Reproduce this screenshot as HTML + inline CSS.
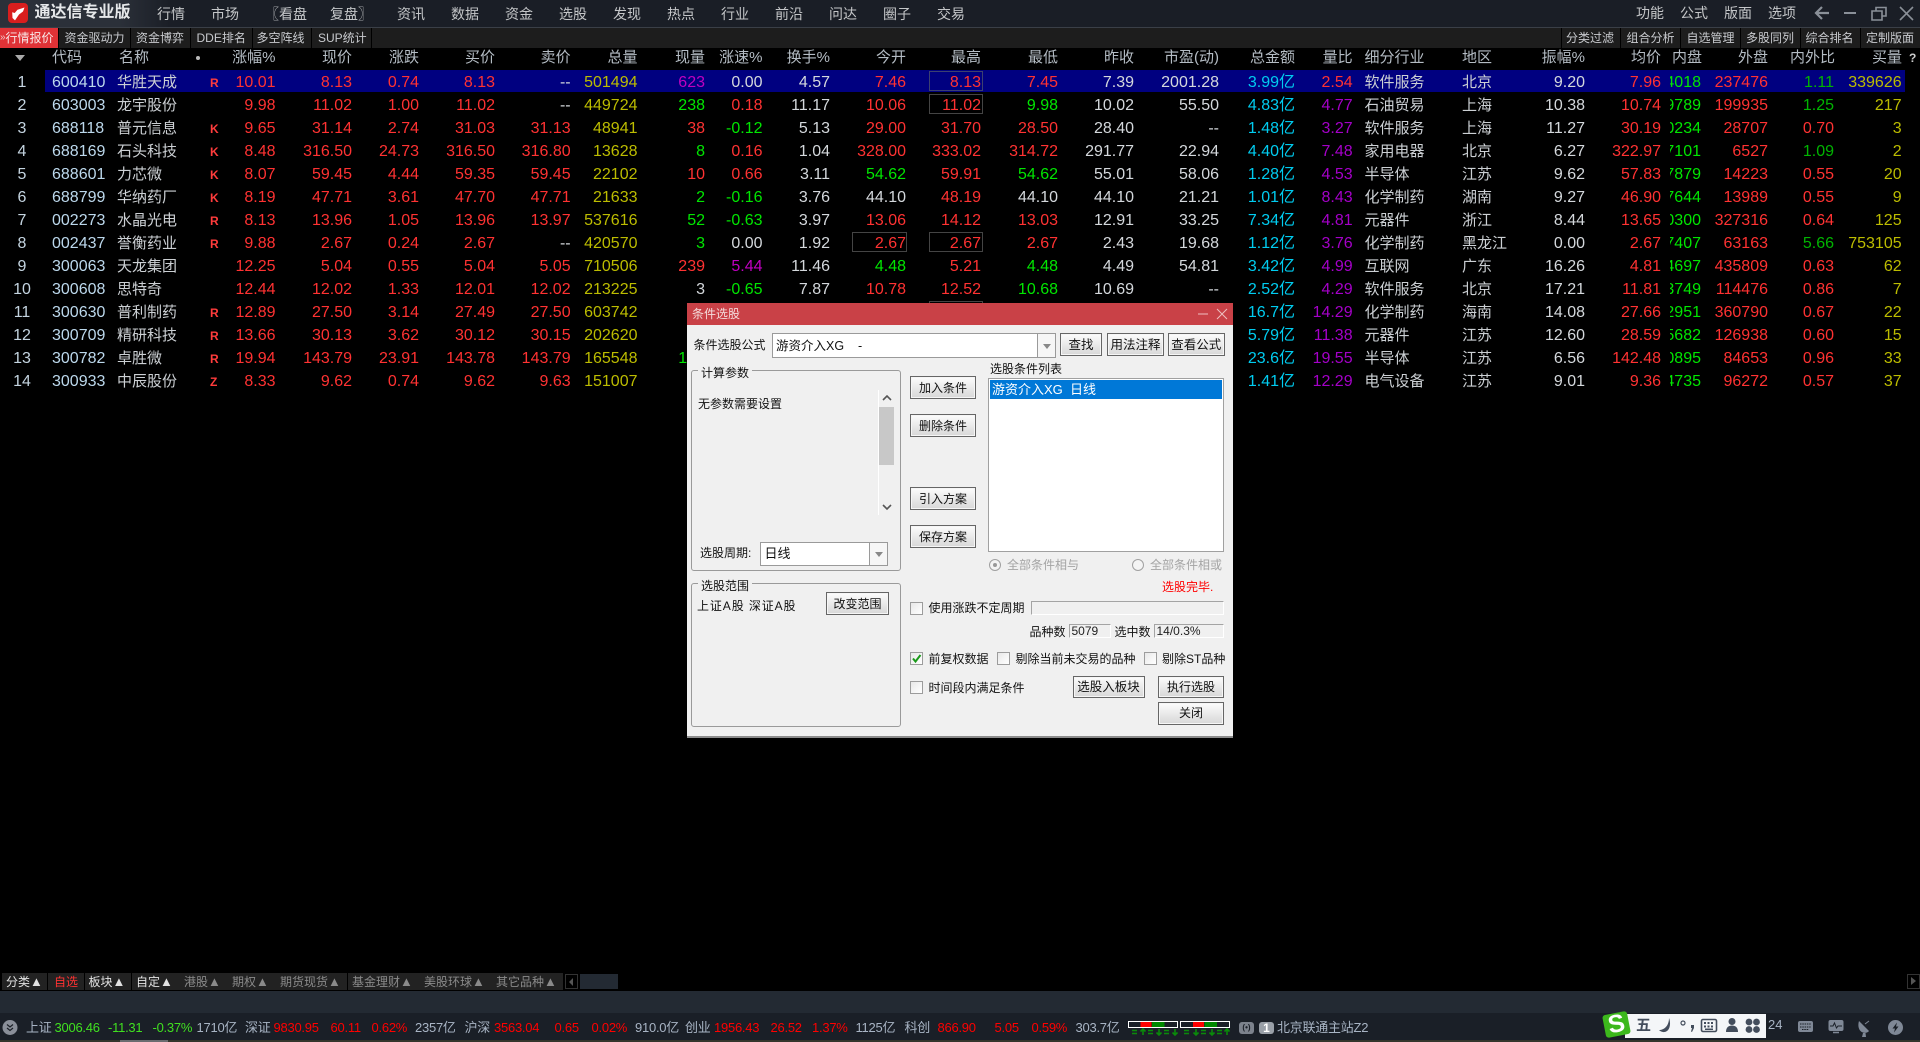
<!DOCTYPE html>
<html lang="zh">
<head>
<meta charset="utf-8">
<title>通达信专业版</title>
<style>
*{box-sizing:border-box;margin:0;padding:0}
html,body{width:1920px;height:1042px;overflow:hidden;background:#000}
body{position:relative;font-family:"Liberation Sans","Noto Sans CJK SC",sans-serif;color:#ccc}
.a{position:absolute;white-space:nowrap}
#top{position:absolute;left:0;top:0;width:1920px;height:28px;background:#1a1e26;border-bottom:1px solid #3a3f47}
#topg{position:absolute;left:0;top:0;width:170px;height:27px;background:linear-gradient(90deg,#2b3039,#2b3039 70%,#1a1e26)}
.m{position:absolute;top:3px;line-height:22px;font-size:14px;color:#c4c6c8;white-space:nowrap}
#tabs{position:absolute;left:0;top:28px;width:1920px;height:20px;background:#1d1d1d}
.t{position:absolute;top:28px;height:20px;line-height:20px;font-size:12px;color:#c8cace;white-space:nowrap}
.sp{position:absolute;top:28px;width:1px;height:20px;background:#000}
.h{position:absolute;top:47px;line-height:22px;font-size:15px;color:#b4bcc4;white-space:nowrap}
.row{position:absolute;left:0;width:1920px;height:23px;line-height:25px;font-size:16px}
.row span{position:absolute;top:0;white-space:nowrap}
.sel{height:22px;line-height:25px}
#selbg{position:absolute;left:45px;top:70px;width:1860px;height:22px;background:#000080}
.n{left:0;width:44px;text-align:center;color:#c4d4e0}
.cd{left:52px;color:#bcd8ec}
.nm{left:117px;font-size:15px;color:#ccd0d4}
.fl{left:210px;top:1px!important;font-size:12px;font-weight:bold;color:#ff3c3c}
.p1,.p2,.p3,.p4,.p5,.p10,.p11,.p12,.p18,.p20{color:#ff3232}
.p1{right:1644.5px}.p2{right:1568px}.p3{right:1501px}.p4{right:1425px}.p5{right:1349.4px}
.p6{right:1282.5px;color:#bcbc00}
.p7{right:1215px;color:#00e600}
.p8{right:1157.5px;color:#ff3232}
.p9{right:1090px;color:#d4d8dc}
.p10{right:1014px}.p11{right:939px}.p12{right:862px}
.p13{right:786px;color:#d4d8dc}
.p14{right:701px;color:#d4d8dc}
.p15{right:625px;color:#00ccf0}
.p16{right:567.4px;color:#a400c8}
.i{left:1364.5px;font-size:15px;color:#ccd0d4}
.d{left:1462px;font-size:15px;color:#ccd0d4}
.p17{right:335px;color:#d4d8dc}
.p18{right:259px}
.p19{left:1670px;width:31px;overflow:hidden;direction:rtl;text-align:right;color:#00e600}
.p20{right:152px}
.p21{right:86px;color:#ff3232}
.p22{right:18.4px;color:#bcbc00}
.w{color:#d4d8dc!important}.r{color:#ff3232!important}.g{color:#00e600!important}.v{color:#c000c0!important}.dg{color:#00b400!important}
.bx{position:absolute;border:1px solid #444;height:20px}
#dlg{position:absolute;left:687px;top:303px;width:546px;height:435px;background:#f0f0f0;border-bottom:2px solid #8c8c8c}
#dt{position:absolute;left:0;top:0;width:546px;height:22px;background:#c94147;color:#f4dcdc;font-size:12px;line-height:22px;padding-left:5px}
.k{position:absolute;color:#111;font-size:12px;line-height:16px;white-space:nowrap}
.btn{position:absolute;border:1px solid #666;background:linear-gradient(#fdfdfd,#e2e2e2 70%,#d8d8d8);color:#111;font-size:12px;text-align:center;white-space:nowrap;box-shadow:inset 0 0 0 1px #f6f6f6}
.grp{position:absolute;border:1px solid #9a9a9a;border-radius:3px}
.leg{position:absolute;background:#f0f0f0;color:#111;font-size:12px;line-height:16px;padding:0 3px;white-space:nowrap}
.cmb{position:absolute;background:#fff;border:1px solid #9a9a9a;color:#111;font-size:12px;white-space:nowrap}
.ar{position:absolute;right:0;top:0;bottom:0;border-left:1px solid #9a9a9a;background:#f6f6f6}
.ar:after{content:"";position:absolute;left:50%;top:50%;margin:-2px 0 0 -4px;border:4px solid transparent;border-top:5px solid #888;border-bottom:0}
.cb{position:absolute;width:13px;height:13px;background:linear-gradient(135deg,#e8e8e8,#fff);border:1px solid #9c9c9c}
.ed{position:absolute;background:#f0f0f0;border:1px solid;border-color:#a4a4a4 #fff #fff #a4a4a4;font-size:12px;color:#222;line-height:13px;padding-left:2px;white-space:nowrap}
.rd{position:absolute;width:12px;height:12px;border-radius:50%;border:1px solid #a0a0a0;background:#f4f4f4}
.bt{position:absolute;top:973px;height:17px;line-height:18px;background:#222;font-size:12px;color:#8a8a8a;padding-left:4px;white-space:nowrap}
.bt i{font-style:normal;font-size:13px}
.on{color:#e2e2e2}
.s{position:absolute;top:1017px;line-height:21px;font-size:13px;letter-spacing:-.25px;white-space:nowrap;color:#a8b4c4}
.sg{color:#40e020}.sr{color:#f00}
</style>
</head>
<body>
<div id="top"></div><div id="topg"></div>
<svg class="a" style="left:8px;top:3px" width="20" height="20" viewBox="0 0 20 20"><rect width="20" height="20" rx="4" fill="#d81e1e"/><path d="M16.5 4.5L9.5 6.8L6.7 10L4.200 9.3L4.500 15L7 17.400L11 11.500L15 8.500Z" fill="#fff"/></svg>
<div class="a" style="left:34.5px;top:1px;font-size:16px;line-height:24px;font-weight:bold;color:#e6e8ea">通达信专业版</div>
<div class="m" style="left:157px">行情</div>
<div class="m" style="left:211px">市场</div>
<div class="m" style="left:265px">〖看盘</div>
<div class="m" style="left:330px">复盘〗</div>
<div class="m" style="left:397px">资讯</div>
<div class="m" style="left:451px">数据</div>
<div class="m" style="left:505px">资金</div>
<div class="m" style="left:559px">选股</div>
<div class="m" style="left:613px">发现</div>
<div class="m" style="left:667px">热点</div>
<div class="m" style="left:721px">行业</div>
<div class="m" style="left:775px">前沿</div>
<div class="m" style="left:829px">问达</div>
<div class="m" style="left:883px">圈子</div>
<div class="m" style="left:937px">交易</div>
<div class="m" style="left:1636px;top:2px">功能</div>
<div class="m" style="left:1680px;top:2px">公式</div>
<div class="m" style="left:1724px;top:2px">版面</div>
<div class="m" style="left:1768px;top:2px">选项</div>
<svg class="a" style="left:1814px;top:5px" width="106" height="18" viewBox="0 0 106 18" fill="none" stroke="#8a9098" stroke-width="1.6"><path d="M15 8H2M8 2L2 8L8 14" stroke-width="2.2"/><path d="M30 8H42" stroke-width="2"/><path d="M58 6H68V15H58ZM62 6V2.500H72V11H68"/><path d="M86 2L99 15M99 2L86 15"/></svg>

<div id="tabs"></div>
<div class="a" style="left:0;top:28px;width:58px;height:20px;background:#e03236"></div>
<div class="t" style="left:0;color:#f0c8c8;font-size:10px">»</div>
<div class="t" style="left:5.5px;color:#f8e8e8;font-size:12px">行情报价</div>
<div class="sp" style="left:58px"></div>
<div class="t" style="left:64.5px">资金驱动力</div><div class="sp" style="left:130px"></div>
<div class="t" style="left:136px">资金博弈</div><div class="sp" style="left:190px"></div>
<div class="t" style="left:196.5px">DDE排名</div><div class="sp" style="left:252px"></div>
<div class="t" style="left:256.5px">多空阵线</div><div class="sp" style="left:311px"></div>
<div class="t" style="left:318px">SUP统计</div><div class="sp" style="left:371px"></div>
<div class="sp" style="left:1561px"></div><div class="t" style="left:1566px">分类过滤</div>
<div class="sp" style="left:1620px"></div><div class="t" style="left:1626.5px">组合分析</div>
<div class="sp" style="left:1680px"></div><div class="t" style="left:1686.5px">自选管理</div>
<div class="sp" style="left:1740px"></div><div class="t" style="left:1746px">多股同列</div>
<div class="sp" style="left:1799.5px"></div><div class="t" style="left:1805.5px">综合排名</div>
<div class="sp" style="left:1859.5px"></div><div class="t" style="left:1866px">定制版面</div>

<div class="a" style="left:15px;top:55px;border:5px solid transparent;border-top:6px solid #aaa;border-bottom:0"></div>
<div class="h" style="left:52px">代码</div>
<div class="h" style="left:119px">名称</div>
<div class="a" style="left:196px;top:56px;width:4px;height:4px;border-radius:50%;background:#bbb"></div>
<div class="h" style="right:1644.5px">涨幅%</div>
<div class="h" style="right:1568px">现价</div>
<div class="h" style="right:1501px">涨跌</div>
<div class="h" style="right:1425px">买价</div>
<div class="h" style="right:1349.4px">卖价</div>
<div class="h" style="right:1282.5px">总量</div>
<div class="h" style="right:1215px">现量</div>
<div class="h" style="right:1157.5px">涨速%</div>
<div class="h" style="right:1090px">换手%</div>
<div class="h" style="right:1014px">今开</div>
<div class="h" style="right:939px">最高</div>
<div class="h" style="right:862px">最低</div>
<div class="h" style="right:786px">昨收</div>
<div class="h" style="right:701px">市盈(动)</div>
<div class="h" style="right:625px">总金额</div>
<div class="h" style="right:567.4px">量比</div>
<div class="h" style="left:1364.5px">细分行业</div>
<div class="h" style="left:1462px">地区</div>
<div class="h" style="right:335px">振幅%</div>
<div class="h" style="right:259px">均价</div>
<div class="h" style="left:1672px">内盘</div>
<div class="h" style="right:152px">外盘</div>
<div class="h" style="right:85px">内外比</div>
<div class="h" style="right:18px">买量</div>
<div class="a" style="left:1909px;top:48px;line-height:20px;font-size:12px;font-weight:bold;color:#ccc">?</div>

<div id="selbg"></div>
<div class="bx" style="left:928.5px;top:71px;width:54px;border-color:#3c4070"></div>
<div class="bx" style="left:928.5px;top:94px;width:54px"></div>
<div class="bx" style="left:852px;top:232px;width:55px"></div>
<div class="bx" style="left:928.5px;top:232px;width:54px"></div>
<div class="bx" style="left:928.5px;top:301px;width:54px"></div>

<div class="row sel" style="top:70px"><span class="n">1</span><span class="cd">600410</span><span class="nm">华胜天成</span><span class="fl">R</span><span class="p1">10.01</span><span class="p2">8.13</span><span class="p3">0.74</span><span class="p4">8.13</span><span class="p5 w">--</span><span class="p6">501494</span><span class="p7 v">623</span><span class="p8 w">0.00</span><span class="p9">4.57</span><span class="p10">7.46</span><span class="p11">8.13</span><span class="p12">7.45</span><span class="p13">7.39</span><span class="p14">2001.28</span><span class="p15">3.99亿</span><span class="p16 r">2.54</span><span class="i">软件服务</span><span class="d">北京</span><span class="p17">9.20</span><span class="p18">7.96</span><span class="p19">4018</span><span class="p20">237476</span><span class="p21 dg">1.11</span><span class="p22">339626</span></div>
<div class="row" style="top:93px"><span class="n">2</span><span class="cd">603003</span><span class="nm">龙宇股份</span><span class="p1">9.98</span><span class="p2">11.02</span><span class="p3">1.00</span><span class="p4">11.02</span><span class="p5 w">--</span><span class="p6">449724</span><span class="p7">238</span><span class="p8">0.18</span><span class="p9">11.17</span><span class="p10">10.06</span><span class="p11">11.02</span><span class="p12 g">9.98</span><span class="p13">10.02</span><span class="p14">55.50</span><span class="p15">4.83亿</span><span class="p16">4.77</span><span class="i">石油贸易</span><span class="d">上海</span><span class="p17">10.38</span><span class="p18">10.74</span><span class="p19">9789</span><span class="p20">199935</span><span class="p21 dg">1.25</span><span class="p22">217</span></div>
<div class="row" style="top:116px"><span class="n">3</span><span class="cd">688118</span><span class="nm">普元信息</span><span class="fl">K</span><span class="p1">9.65</span><span class="p2">31.14</span><span class="p3">2.74</span><span class="p4">31.03</span><span class="p5">31.13</span><span class="p6">48941</span><span class="p7 r">38</span><span class="p8 g">-0.12</span><span class="p9">5.13</span><span class="p10">29.00</span><span class="p11">31.70</span><span class="p12">28.50</span><span class="p13">28.40</span><span class="p14">--</span><span class="p15">1.48亿</span><span class="p16">3.27</span><span class="i">软件服务</span><span class="d">上海</span><span class="p17">11.27</span><span class="p18">30.19</span><span class="p19">0234</span><span class="p20">28707</span><span class="p21">0.70</span><span class="p22">3</span></div>
<div class="row" style="top:139px"><span class="n">4</span><span class="cd">688169</span><span class="nm">石头科技</span><span class="fl">K</span><span class="p1">8.48</span><span class="p2">316.50</span><span class="p3">24.73</span><span class="p4">316.50</span><span class="p5">316.80</span><span class="p6">13628</span><span class="p7">8</span><span class="p8">0.16</span><span class="p9">1.04</span><span class="p10">328.00</span><span class="p11">333.02</span><span class="p12">314.72</span><span class="p13">291.77</span><span class="p14">22.94</span><span class="p15">4.40亿</span><span class="p16">7.48</span><span class="i">家用电器</span><span class="d">北京</span><span class="p17">6.27</span><span class="p18">322.97</span><span class="p19">7101</span><span class="p20">6527</span><span class="p21 dg">1.09</span><span class="p22">2</span></div>
<div class="row" style="top:162px"><span class="n">5</span><span class="cd">688601</span><span class="nm">力芯微</span><span class="fl">K</span><span class="p1">8.07</span><span class="p2">59.45</span><span class="p3">4.44</span><span class="p4">59.35</span><span class="p5">59.45</span><span class="p6">22102</span><span class="p7 r">10</span><span class="p8">0.66</span><span class="p9">3.11</span><span class="p10 g">54.62</span><span class="p11">59.91</span><span class="p12 g">54.62</span><span class="p13">55.01</span><span class="p14">58.06</span><span class="p15">1.28亿</span><span class="p16">4.53</span><span class="i">半导体</span><span class="d">江苏</span><span class="p17">9.62</span><span class="p18">57.83</span><span class="p19">7879</span><span class="p20">14223</span><span class="p21">0.55</span><span class="p22">20</span></div>
<div class="row" style="top:185px"><span class="n">6</span><span class="cd">688799</span><span class="nm">华纳药厂</span><span class="fl">K</span><span class="p1">8.19</span><span class="p2">47.71</span><span class="p3">3.61</span><span class="p4">47.70</span><span class="p5">47.71</span><span class="p6">21633</span><span class="p7">2</span><span class="p8 g">-0.16</span><span class="p9">3.76</span><span class="p10 w">44.10</span><span class="p11">48.19</span><span class="p12 w">44.10</span><span class="p13">44.10</span><span class="p14">21.21</span><span class="p15">1.01亿</span><span class="p16">8.43</span><span class="i">化学制药</span><span class="d">湖南</span><span class="p17">9.27</span><span class="p18">46.90</span><span class="p19">7644</span><span class="p20">13989</span><span class="p21">0.55</span><span class="p22">9</span></div>
<div class="row" style="top:208px"><span class="n">7</span><span class="cd">002273</span><span class="nm">水晶光电</span><span class="fl">R</span><span class="p1">8.13</span><span class="p2">13.96</span><span class="p3">1.05</span><span class="p4">13.96</span><span class="p5">13.97</span><span class="p6">537616</span><span class="p7">52</span><span class="p8 g">-0.63</span><span class="p9">3.97</span><span class="p10">13.06</span><span class="p11">14.12</span><span class="p12">13.03</span><span class="p13">12.91</span><span class="p14">33.25</span><span class="p15">7.34亿</span><span class="p16">4.81</span><span class="i">元器件</span><span class="d">浙江</span><span class="p17">8.44</span><span class="p18">13.65</span><span class="p19">0300</span><span class="p20">327316</span><span class="p21">0.64</span><span class="p22">125</span></div>
<div class="row" style="top:231px"><span class="n">8</span><span class="cd">002437</span><span class="nm">誉衡药业</span><span class="fl">R</span><span class="p1">9.88</span><span class="p2">2.67</span><span class="p3">0.24</span><span class="p4">2.67</span><span class="p5 w">--</span><span class="p6">420570</span><span class="p7">3</span><span class="p8 w">0.00</span><span class="p9">1.92</span><span class="p10">2.67</span><span class="p11">2.67</span><span class="p12">2.67</span><span class="p13">2.43</span><span class="p14">19.68</span><span class="p15">1.12亿</span><span class="p16">3.76</span><span class="i">化学制药</span><span class="d">黑龙江</span><span class="p17">0.00</span><span class="p18">2.67</span><span class="p19">7407</span><span class="p20">63163</span><span class="p21 dg">5.66</span><span class="p22">753105</span></div>
<div class="row" style="top:254px"><span class="n">9</span><span class="cd">300063</span><span class="nm">天龙集团</span><span class="p1">12.25</span><span class="p2">5.04</span><span class="p3">0.55</span><span class="p4">5.04</span><span class="p5">5.05</span><span class="p6">710506</span><span class="p7 r">239</span><span class="p8 v">5.44</span><span class="p9">11.46</span><span class="p10 g">4.48</span><span class="p11">5.21</span><span class="p12 g">4.48</span><span class="p13">4.49</span><span class="p14">54.81</span><span class="p15">3.42亿</span><span class="p16">4.99</span><span class="i">互联网</span><span class="d">广东</span><span class="p17">16.26</span><span class="p18">4.81</span><span class="p19">4697</span><span class="p20">435809</span><span class="p21">0.63</span><span class="p22">62</span></div>
<div class="row" style="top:277px"><span class="n">10</span><span class="cd">300608</span><span class="nm">思特奇</span><span class="p1">12.44</span><span class="p2">12.02</span><span class="p3">1.33</span><span class="p4">12.01</span><span class="p5">12.02</span><span class="p6">213225</span><span class="p7 w">3</span><span class="p8 g">-0.65</span><span class="p9">7.87</span><span class="p10">10.78</span><span class="p11">12.52</span><span class="p12 g">10.68</span><span class="p13">10.69</span><span class="p14">--</span><span class="p15">2.52亿</span><span class="p16">4.29</span><span class="i">软件服务</span><span class="d">北京</span><span class="p17">17.21</span><span class="p18">11.81</span><span class="p19">3749</span><span class="p20">114476</span><span class="p21">0.86</span><span class="p22">7</span></div>
<div class="row" style="top:300px"><span class="n">11</span><span class="cd">300630</span><span class="nm">普利制药</span><span class="fl">R</span><span class="p1">12.89</span><span class="p2">27.50</span><span class="p3">3.14</span><span class="p4">27.49</span><span class="p5">27.50</span><span class="p6">603742</span><span class="p15">16.7亿</span><span class="p16">14.29</span><span class="i">化学制药</span><span class="d">海南</span><span class="p17">14.08</span><span class="p18">27.66</span><span class="p19">2951</span><span class="p20">360790</span><span class="p21">0.67</span><span class="p22">22</span></div>
<div class="row" style="top:323px"><span class="n">12</span><span class="cd">300709</span><span class="nm">精研科技</span><span class="fl">R</span><span class="p1">13.66</span><span class="p2">30.13</span><span class="p3">3.62</span><span class="p4">30.12</span><span class="p5">30.15</span><span class="p6">202620</span><span class="p15">5.79亿</span><span class="p16">11.38</span><span class="i">元器件</span><span class="d">江苏</span><span class="p17">12.60</span><span class="p18">28.59</span><span class="p19">5682</span><span class="p20">126938</span><span class="p21">0.60</span><span class="p22">15</span></div>
<div class="row" style="top:346px"><span class="n">13</span><span class="cd">300782</span><span class="nm">卓胜微</span><span class="fl">R</span><span class="p1">19.94</span><span class="p2">143.79</span><span class="p3">23.91</span><span class="p4">143.78</span><span class="p5">143.79</span><span class="p6">165548</span><span class="p7">123</span><span class="p15">23.6亿</span><span class="p16">19.55</span><span class="i">半导体</span><span class="d">江苏</span><span class="p17">6.56</span><span class="p18">142.48</span><span class="p19">0895</span><span class="p20">84653</span><span class="p21">0.96</span><span class="p22">33</span></div>
<div class="row" style="top:369px"><span class="n">14</span><span class="cd">300933</span><span class="nm">中辰股份</span><span class="fl">Z</span><span class="p1">8.33</span><span class="p2">9.62</span><span class="p3">0.74</span><span class="p4">9.62</span><span class="p5">9.63</span><span class="p6">151007</span><span class="p15">1.41亿</span><span class="p16">12.29</span><span class="i">电气设备</span><span class="d">江苏</span><span class="p17">9.01</span><span class="p18">9.36</span><span class="p19">4735</span><span class="p20">96272</span><span class="p21">0.57</span><span class="p22">37</span></div>

<!-- dialog: inner coordinates = page − (687,303) -->
<div id="dlg">
<div id="dt">条件选股</div>
<svg class="a" style="left:511px;top:5px" width="30" height="12" viewBox="0 0 30 12" fill="none" stroke="#eebfc0" stroke-width="1"><path d="M0 6H10M19 1L29 11M29 1L19 11"/></svg>

<div class="k" style="left:6.5px;top:34px">条件选股公式</div>
<div class="cmb" style="left:85px;top:30px;width:284px;height:25px;line-height:24px;padding-left:3px;font-size:12.5px">游资介入XG &nbsp;&nbsp; -<div class="ar" style="width:18px"></div></div>
<div class="btn" style="left:373px;top:30px;width:42px;height:23px;line-height:22px;font-size:12.5px">查找</div>
<div class="btn" style="left:420px;top:30px;width:57px;height:23px;line-height:22px;font-size:12.5px">用法注释</div>
<div class="btn" style="left:481px;top:30px;width:56.5px;height:23px;line-height:22px;font-size:12.5px">查看公式</div>

<div class="grp" style="left:4px;top:67px;width:210px;height:201px"></div>
<div class="leg" style="left:11px;top:62px">计算参数</div>
<div class="k" style="left:11px;top:93px">无参数需要设置</div>
<div class="a" style="left:191px;top:87px;width:1px;height:125px;background:#fff"></div>
<div class="a" style="left:192px;top:104px;width:15px;height:58px;background:#c8c8c8"></div>
<svg class="a" style="left:195px;top:92px" width="10" height="120" viewBox="0 0 10 120" fill="none" stroke="#555" stroke-width="1.6"><path d="M1 5L5 1L9 5"/><path d="M1 110L5 114L9 110"/></svg>
<div class="k" style="left:13px;top:242px">选股周期:</div>
<div class="cmb" style="left:73px;top:238.5px;width:128px;height:24px;line-height:22px;padding-left:3.500px;font-size:13px">日线<div class="ar" style="width:18px"></div></div>

<div class="btn" style="left:223px;top:73px;width:66px;height:23px;line-height:22px">加入条件</div>
<div class="btn" style="left:223px;top:111px;width:66px;height:23px;line-height:22px">删除条件</div>
<div class="btn" style="left:223px;top:184px;width:66px;height:23px;line-height:22px">引入方案</div>
<div class="btn" style="left:223px;top:222px;width:66px;height:23px;line-height:22px">保存方案</div>

<div class="k" style="left:303px;top:58px">选股条件列表</div>
<div class="a" style="left:301px;top:75px;width:236px;height:174px;background:#fff;border:1px solid #a0a0a0"></div>
<div class="a" style="left:303px;top:77px;width:232px;height:19px;background:#0078d7;color:#fff;font-size:13px;line-height:20px;padding-left:2px">游资介入XG &nbsp;日线</div>

<div class="rd" style="left:302px;top:256px"></div><div class="a" style="left:306px;top:260px;width:4px;height:4px;border-radius:50%;background:#999"></div>
<div class="k" style="left:320px;top:254px;color:#a4a4a4">全部条件相与</div>
<div class="rd" style="left:444.5px;top:256px"></div>
<div class="k" style="left:463px;top:254px;color:#a4a4a4">全部条件相或</div>
<div class="k" style="left:475px;top:276px;color:#f00">选股完毕.</div>

<div class="grp" style="left:4px;top:280px;width:210px;height:144px"></div>
<div class="leg" style="left:11px;top:275px">选股范围</div>
<div class="k" style="left:10px;top:295px;letter-spacing:.9px">上证A股 深证A股</div>
<div class="btn" style="left:139px;top:289px;width:63px;height:23px;line-height:22px">改变范围</div>

<div class="cb" style="left:223px;top:299px"></div>
<div class="k" style="left:241.5px;top:297px">使用涨跌不定周期</div>
<div class="ed" style="left:343.500px;top:298px;width:193.500px;height:14px"></div>
<div class="k" style="left:342.5px;top:321px">品种数</div>
<div class="ed" style="left:381.5px;top:321px;width:42px;height:14px">5079</div>
<div class="k" style="left:427.5px;top:321px">选中数</div>
<div class="ed" style="left:466.5px;top:321px;width:70.500px;height:14px">14/0.3%</div>

<div class="cb" style="left:223px;top:349px"></div>
<svg class="a" style="left:224px;top:350px" width="11" height="11" viewBox="0 0 11 11" fill="none" stroke="#1a9a1a" stroke-width="2"><path d="M2 5.500L4.500 8.500L9.500 2"/></svg>
<div class="k" style="left:241.5px;top:348px">前复权数据</div>
<div class="cb" style="left:310px;top:349px"></div>
<div class="k" style="left:328.5px;top:348px">剔除当前未交易的品种</div>
<div class="cb" style="left:457px;top:349px"></div>
<div class="k" style="left:475px;top:348px">剔除ST品种</div>
<div class="cb" style="left:223px;top:378px"></div>
<div class="k" style="left:241.5px;top:377px">时间段内满足条件</div>
<div class="btn" style="left:385.5px;top:372.5px;width:72px;height:22.5px;line-height:21px;font-size:12.5px">选股入板块</div>
<div class="btn" style="left:471px;top:372.5px;width:66px;height:22.5px;line-height:21px">执行选股</div>
<div class="btn" style="left:471px;top:399px;width:66px;height:22.5px;line-height:21px">关闭</div>
</div>

<!-- bottom tabs -->
<div class="bt on" style="left:2px;width:45px">分类<i>▲</i></div>
<div class="bt" style="left:48px;width:36px;color:#ff3232;padding-left:6px">自选</div>
<div class="bt on" style="left:84.5px;width:46.5px">板块<i>▲</i></div>
<div class="bt on" style="left:132px;width:47.5px">自定<i>▲</i></div>
<div class="bt" style="left:180px;width:47.5px">港股<i>▲</i></div>
<div class="bt" style="left:228px;width:47.5px">期权<i>▲</i></div>
<div class="bt" style="left:276px;width:71px">期货现货<i>▲</i></div>
<div class="bt" style="left:348px;width:71.5px">基金理财<i>▲</i></div>
<div class="bt" style="left:420px;width:71.5px">美股环球<i>▲</i></div>
<div class="bt" style="left:492px;width:71px">其它品种<i>▲</i></div>
<div class="a" style="left:565px;top:974px;width:13px;height:15px;border:1px solid #333"></div>
<div class="a" style="left:569px;top:978px;border:4px solid transparent;border-right:4px solid #555;border-left:0"></div>
<div class="a" style="left:579.5px;top:974px;width:38px;height:15px;background:#232a33"></div>
<div class="a" style="left:1906.5px;top:974px;width:13px;height:15px;border:1px solid #333"></div>
<div class="a" style="left:1911px;top:977px;border:4px solid transparent;border-left:5px solid #555;border-right:0"></div>

<!-- status -->
<div class="a" style="left:0;top:991px;width:1920px;height:22px;background:#232a33"></div>
<div class="a" style="left:0;top:1013px;width:1920px;height:27px;background:#1a1f27"></div>
<div class="a" style="left:0;top:1040px;width:1920px;height:2px;background:#34352c"></div>
<div class="a" style="left:120px;top:1040px;width:48px;height:2px;background:#6a6c70"></div>

<svg class="a" style="left:2px;top:1019px" width="16" height="17" viewBox="0 0 16 17"><circle cx="8" cy="8.500" r="7.500" fill="#8a8f99"/><path d="M5 5.500L8 8L11 5.500M5 9L8 11.500L11 9" fill="none" stroke="#1a1f27" stroke-width="1.2"/></svg>
<div class="s" style="left:26px">上证</div>
<div class="s sg" style="left:54.5px">3006.46</div>
<div class="s sg" style="left:108px">-11.31</div>
<div class="s sg" style="left:152.5px">-0.37%</div>
<div class="s" style="left:196.5px">1710亿</div>
<div class="s" style="left:245px">深证</div>
<div class="s sr" style="left:273.5px">9830.95</div>
<div class="s sr" style="left:330.5px">60.11</div>
<div class="s sr" style="left:371.5px">0.62%</div>
<div class="s" style="left:415px">2357亿</div>
<div class="s" style="left:464.5px">沪深</div>
<div class="s sr" style="left:494px">3563.04</div>
<div class="s sr" style="left:554.5px">0.65</div>
<div class="s sr" style="left:591.5px">0.02%</div>
<div class="s" style="left:635px">910.0亿</div>
<div class="s" style="left:685px">创业</div>
<div class="s sr" style="left:714px">1956.43</div>
<div class="s sr" style="left:770.5px">26.52</div>
<div class="s sr" style="left:812px">1.37%</div>
<div class="s" style="left:855.5px">1125亿</div>
<div class="s" style="left:904.5px">科创</div>
<div class="s sr" style="left:937.5px">866.90</div>
<div class="s sr" style="left:994.5px">5.05</div>
<div class="s sr" style="left:1031.5px">0.59%</div>
<div class="s" style="left:1075.5px">303.7亿</div>

<svg class="a" style="left:1128px;top:1020px" width="103" height="16" viewBox="0 0 103 16">
<g fill="none" stroke="#fff"><rect x=".5" y="1.500" width="49" height="6"/><rect x="52.5" y="1.500" width="49" height="6"/></g>
<rect x="12.500" y="2" width="11" height="5" fill="#f00"/><rect x="24" y="2" width="12.500" height="5" fill="#080"/>
<rect x="65" y="2" width="11" height="5" fill="#f00"/><rect x="76.500" y="2" width="12.500" height="5" fill="#080"/>
<g stroke="#0a8a0a" stroke-width="1.6" fill="none">
<path d="M4 10.500H9M4 13.500H9M15 9V15M12.500 11.500L15 9L17.500 11.500M20 10.500H25M20 13.500H25M31 9V15M28.500 12.500L31 15L33.500 12.500M36 10.500H41M36 13.500H41M47 9V15M44.500 12.500L47 15L49.500 12.500"/>
<path d="M56 10.500H61M56 13.500H61M68 9V15M65.500 12.500L68 15L70.500 12.500M73 10.500H78M73 13.500H78M84 9V15M81.500 12.500L84 15L86.500 12.500M89 10.500H94M89 13.500H94M99 9V15M96.500 11.500L99 9L101.500 11.500"/></g></svg>

<div class="a" style="left:1239px;top:1022px;width:15px;height:12px;border-radius:3px;background:#7c828c;color:#1a1f27;font-size:8px;line-height:12px;text-align:center;font-weight:bold">(•)</div>
<div class="a" style="left:1259px;top:1022px;width:15px;height:12px;border-radius:3px;background:#9aa0a8;color:#fff;font-size:12px;line-height:12px;text-align:center;font-weight:bold">1</div>
<div class="s" style="left:1277px">北京联通主站Z2</div>
<div class="a" style="left:1768px;top:1014px;line-height:22px;font-size:13px;color:#a8b4c4">24</div>

<div class="a" style="left:1625px;top:1014px;width:141px;height:24px;background:#f4f6f8"></div>
<div class="a" style="left:1604px;top:1013px;width:25px;height:23px;border-radius:3px;background:#3cb81c;transform:rotate(-11deg);color:#fff;font-weight:bold;font-size:25px;line-height:23px;text-align:center">S</div>
<div class="a" style="left:1636px;top:1014px;line-height:24px;font-size:15px;color:#434d5c;font-weight:bold">五</div>
<svg class="a" style="left:1658px;top:1017px" width="106" height="18" viewBox="0 0 106 18" fill="#434d5c">
<path d="M11 1C13 6 12 12 9 14C6 16 3 15 1 13C6 13 11 9 11 1Z"/>
<circle cx="25" cy="6" r="2" fill="none" stroke="#434d5c" stroke-width="1.2"/><path d="M33 8H36V11L34 15L33 14.500L34 11H33Z"/>
<rect x="43.500" y="2.500" width="15" height="12" rx="1.500" fill="none" stroke="#434d5c" stroke-width="1.6"/><path d="M46 5h2v2h-2zM49.500 5h2v2h-2zM53 5h2v2h-2zM46 8.500h2v2h-2zM49.500 8.500h2v2h-2zM53 8.500h2v2h-2zM47 11.500h8v1.500h-8z"/>
<circle cx="74" cy="4.500" r="3.500"/><path d="M68 15C68 10 71 8.500 74 8.500C77 8.500 80 10 80 15Z"/>
<circle cx="91" cy="5" r="3.400"/><circle cx="98.500" cy="5" r="3.400"/><circle cx="91" cy="12.500" r="3.400"/><circle cx="98.500" cy="12.500" r="3.400"/>
</svg>

<svg class="a" style="left:1796px;top:1019px" width="112" height="20" viewBox="0 0 112 20" fill="#7f8896">
<rect x="2" y="2" width="15" height="11" rx="2"/><path d="M4 5h11M4 8h11M6 10.500h7" stroke="#1a1f27" stroke-width="1" stroke-dasharray="1.500 .8"/>
<rect x="32.500" y="1" width="15" height="11" rx="2"/><path d="M34 7H37L38.500 4L40.500 9L42 7H46" stroke="#1a1f27" stroke-width="1" fill="none"/><path d="M37 13.500H43" stroke="#7f8896" stroke-width="1.500"/>
<path d="M63 2L73 12C71 14.500 67 14.500 64.500 12C62 9.500 62 5 63 2Z"/><path d="M67 14L66 18H70L69.500 14Z"/><path d="M69 5L73 2" stroke="#7f8896" stroke-width="1"/>
<circle cx="99.500" cy="8.500" r="7.500"/><path d="M101 3.500L96.500 9.500H99L98 13.500L102.500 7.500H100Z" fill="#1a1f27"/>
</svg>
</body>
</html>
